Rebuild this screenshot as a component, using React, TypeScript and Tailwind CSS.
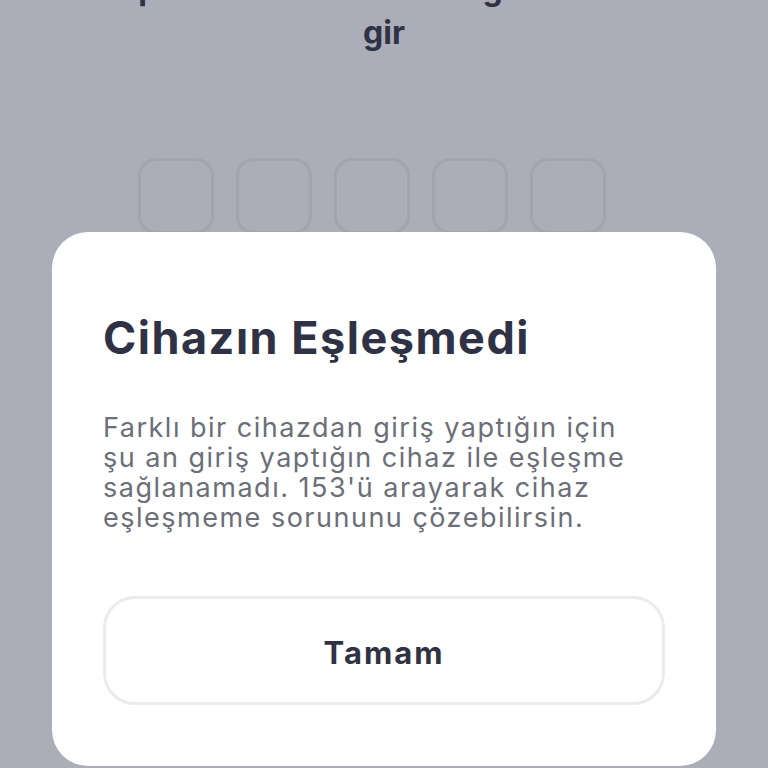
export default function App() {
  const boxes = [0, 1, 2, 3, 4];

  return (
    <div className="relative h-[768px] w-full overflow-hidden bg-[#abaeb8] font-['Inter',sans-serif]">
      <div className="flex flex-col">
        <h1 className="-mt-[33px] text-center text-[32px] font-bold leading-[44px] text-[#2f3244]">
          Operatöründen SMS ile gelen kodu
          <br />
          gir
        </h1>
        <div className="mt-[103px] flex gap-[22px] pl-[138px]">
          {boxes.map((b) => (
            <div key={b} className="h-[76px] w-[76px] rounded-[18px] border-[3px] border-[#a2a5af]" />
          ))}
        </div>
      </div>

      <div className="absolute inset-0 flex flex-col justify-end px-[52px] pb-[2px]">
        <div className="flex h-[534px] flex-col rounded-[36px] bg-white px-[51px] pt-[79px]">
          <h2 className="text-[45px] font-bold leading-[54px] tracking-[1.5px] text-[#2f3244]">
            Cihazın Eşleşmedi
          </h2>
          <p className="mt-[48px] max-w-[535px] text-[27px] leading-[30px] tracking-[1.5px] text-[#6c6e78]">
            Farklı bir cihazdan giriş yaptığın için şu an giriş yaptığın cihaz ile eşleşme sağlanamadı. 153'ü arayarak cihaz eşleşmeme sorununu çözebilirsin.
          </p>
          <button className="mt-[63px] flex h-[109px] w-full items-center justify-center rounded-[32px] border-[3px] border-[#ebebed] bg-white pt-[6px] text-[31px] font-bold tracking-[2px] text-[#2f3244]">
            Tamam
          </button>
        </div>
      </div>
    </div>
  );
}
